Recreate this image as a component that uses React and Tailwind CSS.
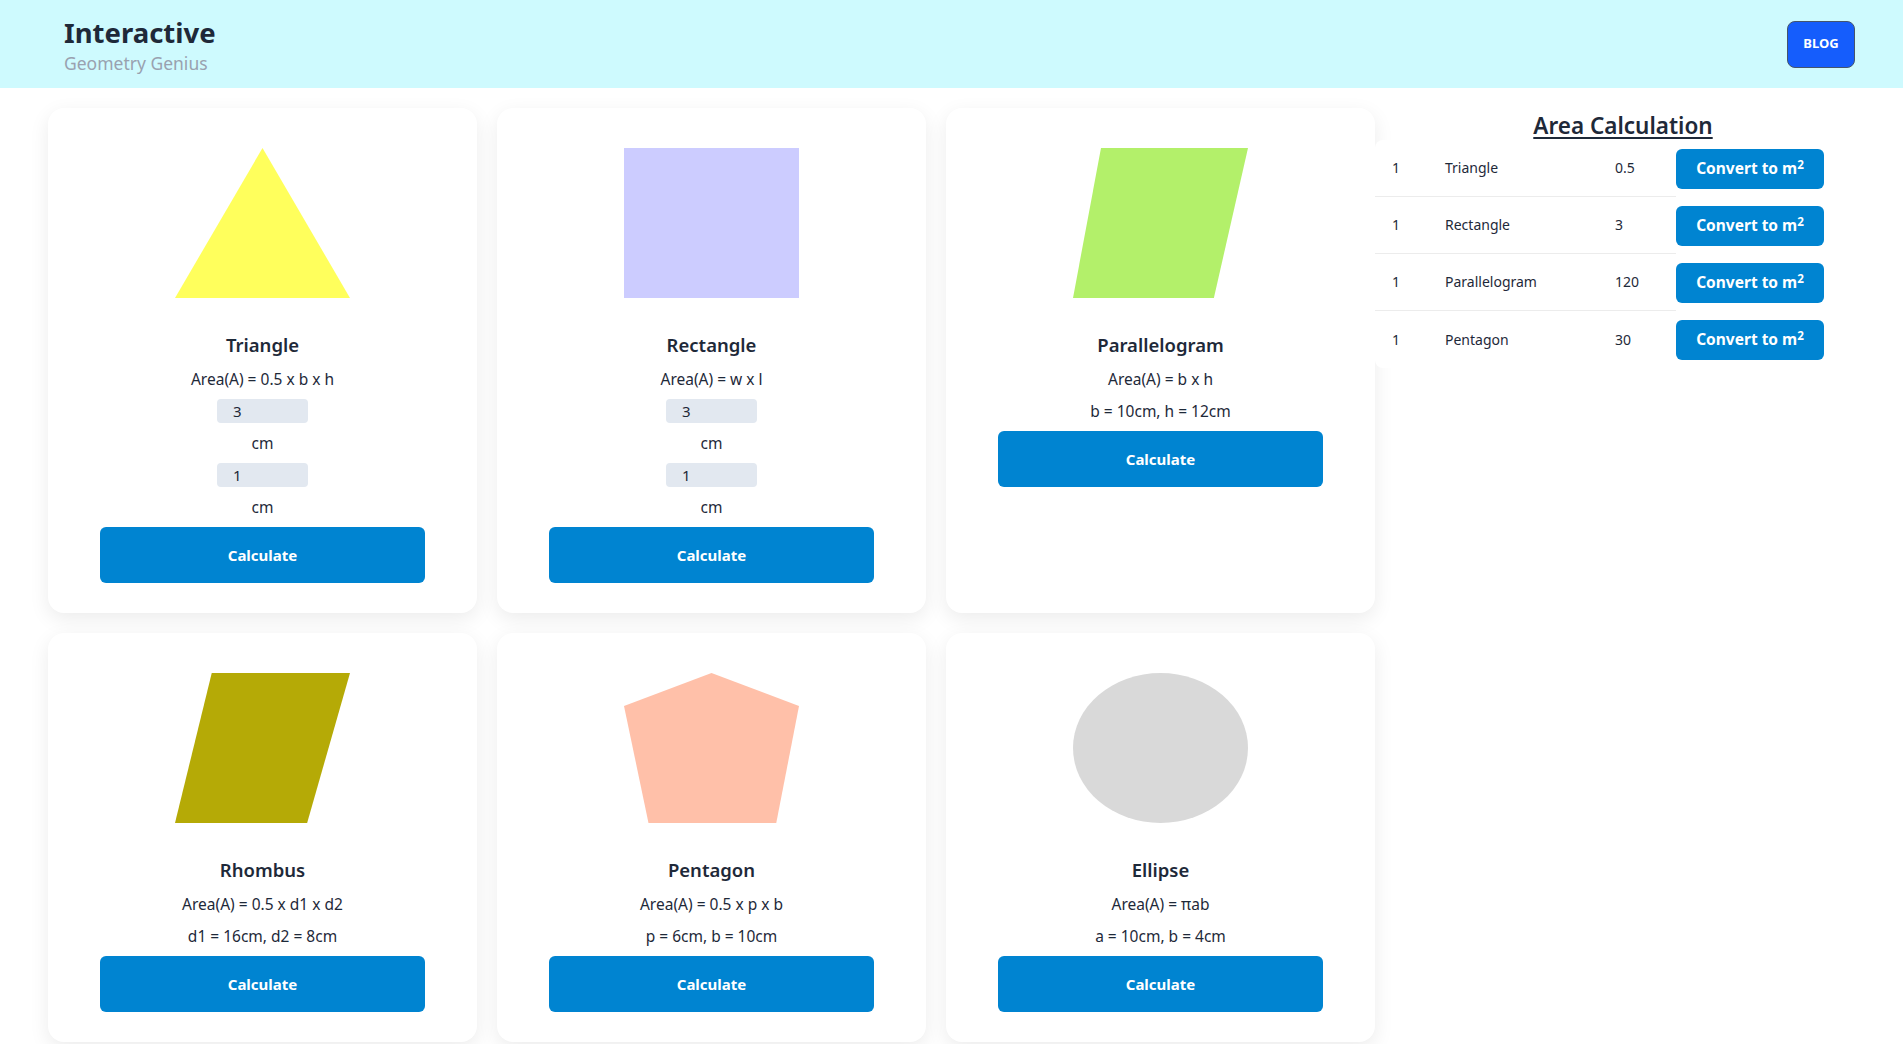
import React from "react";

const FONT = { fontFamily: '"Segoe UI", "Noto Sans", "Open Sans", sans-serif' };

function Shape({ kind }) {
  if (kind === "triangle")
    return <div className="w-[175px] h-[150px] bg-[#ffff5c] [clip-path:polygon(50%_0,100%_100%,0_100%)]" />;
  if (kind === "rectangle") return <div className="w-[175px] h-[150px] bg-[#ccccff]" />;
  if (kind === "parallelogram")
    return <div className="w-[175px] h-[150px] bg-[#b3f06a] [clip-path:polygon(16%_0,100%_0,80.5%_100%,0_100%)]" />;
  if (kind === "rhombus")
    return <div className="w-[175px] h-[150px] bg-[#b5aa06] [clip-path:polygon(21%_0,100%_0,75.5%_100%,0_100%)]" />;
  if (kind === "pentagon")
    return (
      <div className="w-[175px] h-[150px] bg-[#ffc0a9] [clip-path:polygon(50%_0,100%_22%,87%_100%,14%_100%,0_22%)]" />
    );
  return <div className="w-[175px] h-[150px] bg-[#d9d9d9] rounded-[50%]" />;
}

function Line({ children }) {
  return <div className="h-6 leading-6 text-[15.5px] text-gray-800">{children}</div>;
}

function Input({ value }) {
  return (
    <input
      type="text"
      readOnly
      defaultValue={value}
      className="w-[91px] h-6 rounded bg-slate-200 pl-4 text-[15px] text-gray-800 outline-none"
      style={FONT}
    />
  );
}

function Card({ kind, title, formula, inputs, params }) {
  return (
    <div className="bg-white rounded-2xl shadow-[0_6px_20px_rgba(0,0,0,0.08)] flex flex-col items-center pt-10 pb-[30px]">
      <Shape kind={kind} />
      <h3 className="mt-[33px] text-[18.5px] leading-7 font-semibold text-gray-800">{title}</h3>
      <div className="mt-2 flex flex-col items-center gap-2">
        <Line>{formula}</Line>
        {inputs ? (
          <>
            <Input value={inputs[0]} />
            <Line>cm</Line>
            <Input value={inputs[1]} />
            <Line>cm</Line>
          </>
        ) : (
          <Line>{params}</Line>
        )}
        <button className="w-[325px] h-14 rounded-md bg-sky-600 text-white font-bold text-[15px]">
          Calculate
        </button>
      </div>
    </div>
  );
}

const rows = [
  ["1", "Triangle", "0.5"],
  ["1", "Rectangle", "3"],
  ["1", "Parallelogram", "120"],
  ["1", "Pentagon", "30"],
];

export default function App() {
  return (
    <div className="min-h-screen bg-white" style={FONT}>
      <header className="h-[88px] bg-cyan-100 flex items-center justify-between pl-16 pr-12">
        <div className="flex flex-col">
          <h1 className="text-[27.5px] leading-9 font-bold text-gray-800 mt-[3px]">Interactive</h1>
          <p className="text-[17.5px] leading-7 text-gray-400 -mt-[2px]">Geometry Genius</p>
        </div>
        <button className="w-[68px] h-[47px] rounded-lg bg-blue-600 border border-slate-600 text-white text-[13px] font-bold">
          BLOG
        </button>
      </header>

      <main className="flex pl-12 pr-8 pt-5">
        <div className="grid grid-cols-[429px_429px_429px] gap-5">
          <Card kind="triangle" title="Triangle" formula="Area(A) = 0.5 x b x h" inputs={["3", "1"]} />
          <Card kind="rectangle" title="Rectangle" formula="Area(A) = w x l" inputs={["3", "1"]} />
          <Card kind="parallelogram" title="Parallelogram" formula="Area(A) = b x h" params="b = 10cm, h = 12cm" />
          <Card kind="rhombus" title="Rhombus" formula="Area(A) = 0.5 x d1 x d2" params="d1 = 16cm, d2 = 8cm" />
          <Card kind="pentagon" title="Pentagon" formula="Area(A) = 0.5 x p x b" params="p = 6cm, b = 10cm" />
          <Card kind="ellipse" title="Ellipse" formula="Area(A) = πab" params="a = 10cm, b = 4cm" />
        </div>

        <aside className="flex-1 flex flex-col">
          <h2 className="text-center text-[22.5px] leading-[29px] pt-[3px] font-semibold text-gray-800 underline underline-offset-[3px]">
            Area Calculation
          </h2>
          <div className="bg-white rounded-lg">
            {rows.map((r, i) => (
              <div key={i} className="grid grid-cols-[54px_170px_77px_148px] h-[57px] items-stretch text-sm text-gray-800">
                <div className={`pl-[17px] flex items-center ${i < 3 ? "border-b border-[#ececec]" : ""}`}>{r[0]}</div>
                <div className={`pl-4 flex items-center ${i < 3 ? "border-b border-[#ececec]" : ""}`}>{r[1]}</div>
                <div className={`pl-4 flex items-center ${i < 3 ? "border-b border-[#ececec]" : ""}`}>{r[2]}</div>
                <div className="flex items-center">
                  <button className="w-[148px] h-10 rounded-md bg-sky-600 text-white font-bold text-[15.5px]">
                    Convert to m<sup>2</sup>
                  </button>
                </div>
              </div>
            ))}
          </div>
        </aside>
      </main>
    </div>
  );
}
